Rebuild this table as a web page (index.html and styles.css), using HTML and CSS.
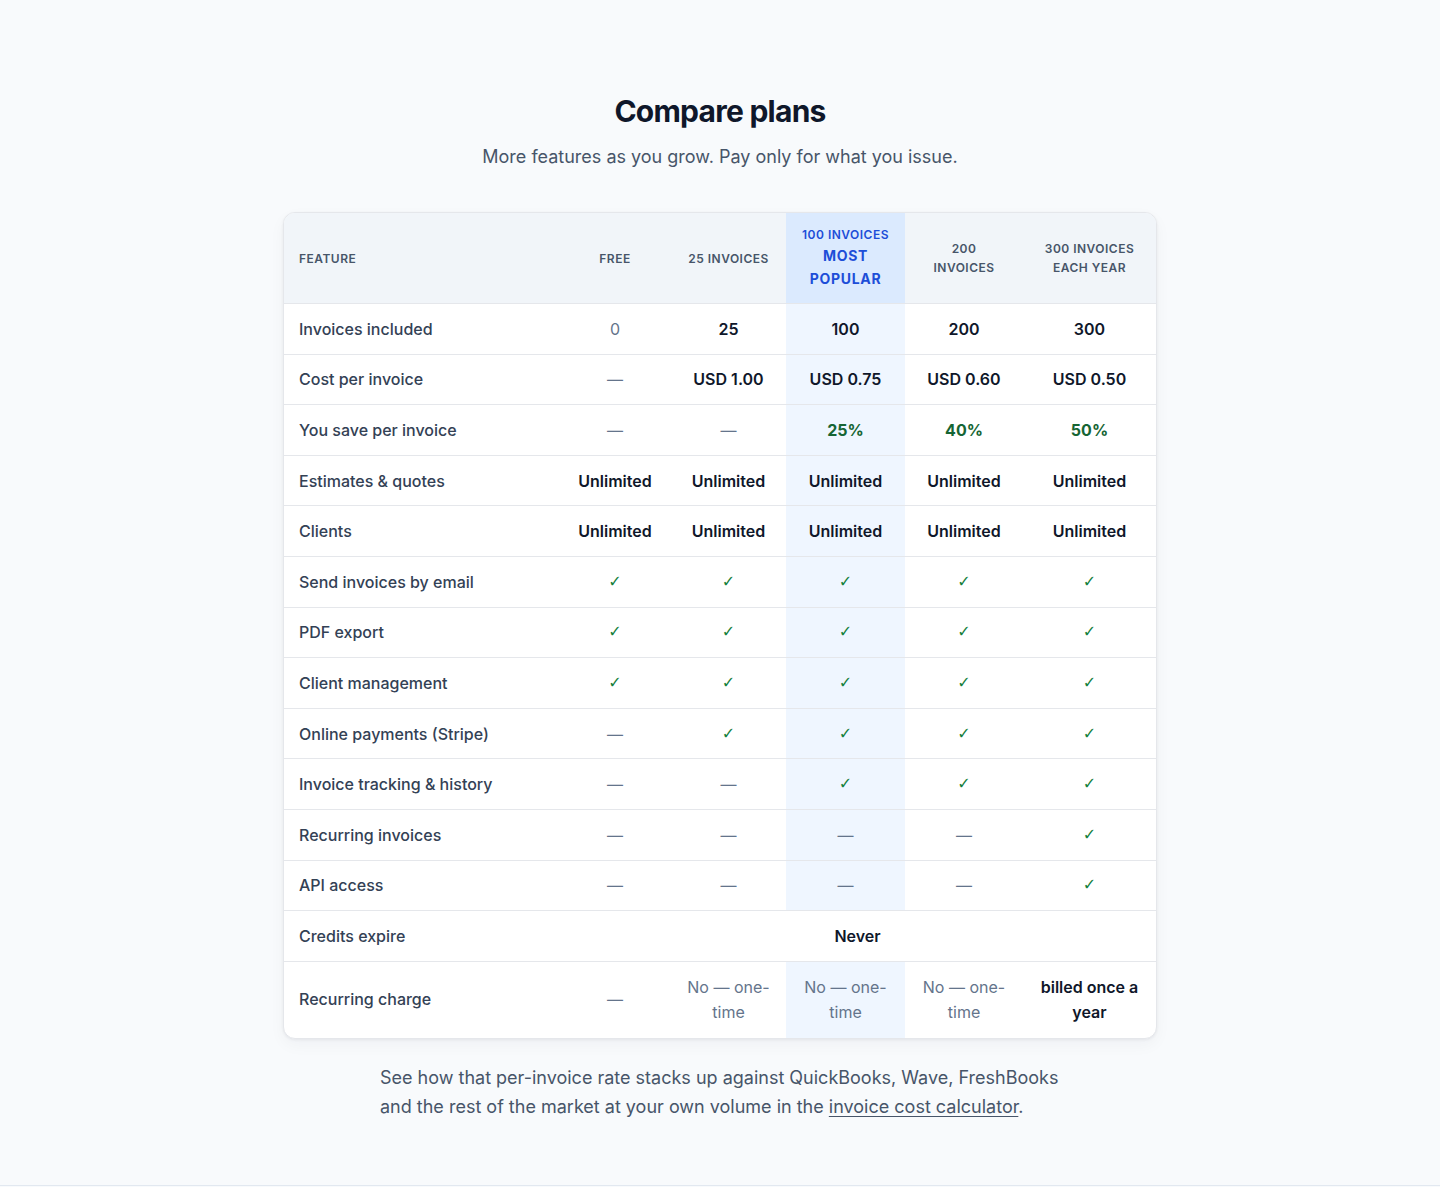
FILE: index.html
```html
<!DOCTYPE html>
<html lang="en">
<head>
<meta charset="utf-8">
<title>Compare plans</title>
<link rel="stylesheet" href="styles.css">
</head>
<body>
<section class="compare">
  <h1 class="title">Compare plans</h1>
  <p class="subtitle">More features as you grow. Pay only for what you issue.</p>
  <div class="card">
    <table class="plans">
      <colgroup>
        <col class="c-feature"><col class="c-free"><col class="c-25"><col class="c-100"><col class="c-200"><col class="c-300">
      </colgroup>
      <thead>
        <tr>
          <th class="feat">Feature</th>
          <th>Free</th>
          <th>25 invoices</th>
          <th class="pop"><span class="pop-name">100 invoices</span><span class="pop-tag">Most popular</span></th>
          <th>200 invoices</th>
          <th>300 invoices each year</th>
        </tr>
      </thead>
      <tbody>
        <tr><td class="feat">Invoices included</td><td class="muted">0</td><td class="strong">25</td><td class="pop strong">100</td><td class="strong">200</td><td class="strong">300</td></tr>
        <tr><td class="feat">Cost per invoice</td><td class="dash">—</td><td class="strong">USD 1.00</td><td class="pop strong">USD 0.75</td><td class="strong">USD 0.60</td><td class="strong">USD 0.50</td></tr>
        <tr><td class="feat">You save per invoice</td><td class="dash">—</td><td class="dash">—</td><td class="pop save">25%</td><td class="save">40%</td><td class="save">50%</td></tr>
        <tr><td class="feat">Estimates &amp; quotes</td><td class="strong">Unlimited</td><td class="strong">Unlimited</td><td class="pop strong">Unlimited</td><td class="strong">Unlimited</td><td class="strong">Unlimited</td></tr>
        <tr><td class="feat">Clients</td><td class="strong">Unlimited</td><td class="strong">Unlimited</td><td class="pop strong">Unlimited</td><td class="strong">Unlimited</td><td class="strong">Unlimited</td></tr>
        <tr><td class="feat">Send invoices by email</td><td class="check">✓</td><td class="check">✓</td><td class="pop check">✓</td><td class="check">✓</td><td class="check">✓</td></tr>
        <tr><td class="feat">PDF export</td><td class="check">✓</td><td class="check">✓</td><td class="pop check">✓</td><td class="check">✓</td><td class="check">✓</td></tr>
        <tr><td class="feat">Client management</td><td class="check">✓</td><td class="check">✓</td><td class="pop check">✓</td><td class="check">✓</td><td class="check">✓</td></tr>
        <tr><td class="feat">Online payments (Stripe)</td><td class="dash">—</td><td class="check">✓</td><td class="pop check">✓</td><td class="check">✓</td><td class="check">✓</td></tr>
        <tr><td class="feat">Invoice tracking &amp; history</td><td class="dash">—</td><td class="dash">—</td><td class="pop check">✓</td><td class="check">✓</td><td class="check">✓</td></tr>
        <tr><td class="feat">Recurring invoices</td><td class="dash">—</td><td class="dash">—</td><td class="pop dash">—</td><td class="dash">—</td><td class="check">✓</td></tr>
        <tr><td class="feat">API access</td><td class="dash">—</td><td class="dash">—</td><td class="pop dash">—</td><td class="dash">—</td><td class="check">✓</td></tr>
        <tr><td class="feat">Credits expire</td><td class="strong" colspan="5">Never</td></tr>
        <tr class="last"><td class="feat">Recurring charge</td><td class="dash">—</td><td class="muted">No — one-time</td><td class="pop muted">No — one-time</td><td class="muted">No — one-time</td><td class="strong">billed once a year</td></tr>
      </tbody>
    </table>
  </div>
  <p class="note">See how that per-invoice rate stacks up against QuickBooks, Wave, FreshBooks and the rest of the market at your own volume in the <a href="#">invoice cost calculator</a>.</p>
</section>
</body>
</html>
```

FILE: styles.css
```css
* { box-sizing: border-box; }
html, body { margin: 0; padding: 0; }
body {
  background: #f8fafc;
  font-family: Inter, "Noto Sans", sans-serif;
  color: #0f172a;
}
.compare {
  padding: 93px 0 64px;
  border-bottom: 1px solid #e2e8f0;
  display: flex;
  flex-direction: column;
  align-items: center;
}
.title {
  margin: 0;
  font-size: 30px;
  line-height: 36px;
  font-weight: 700;
  letter-spacing: -0.025em;
  color: #0f172a;
}
.subtitle {
  margin: 14px 0 0;
  font-size: 18px;
  line-height: 28px;
  color: #475569;
}
.card {
  margin-top: 41px;
  width: 874px;
  background: #fff;
  border: 1px solid #e5e7eb;
  border-radius: 12px;
  overflow: hidden;
  box-shadow: 0 1px 3px rgba(15, 23, 42, 0.06), 0 6px 16px rgba(15, 23, 42, 0.04);
}
.plans {
  width: 100%;
  border-collapse: separate;
  border-spacing: 0;
  table-layout: fixed;
}
.c-feature { width: 275px; }
.c-free { width: 112px; }
.c-25 { width: 115px; }
.c-100 { width: 119px; }
.c-200 { width: 118px; }
.c-300 { width: 133px; }
.plans th {
  background: #f1f5f9;
  padding: 13px 16px;
  font-size: 12px;
  line-height: 19px;
  font-weight: 600;
  letter-spacing: 0.04em;
  text-transform: uppercase;
  color: #475569;
  text-align: center;
  border-bottom: 1px solid #e5e7eb;
  height: 91px;
}
.plans th.feat { text-align: left; padding-left: 15px; }
.plans th.pop { background: #dbeafe; color: #1d4ed8; }
.pop-name { display: block; white-space: nowrap; font-size: 12px; line-height: 18px; }
.pop-tag { display: block; font-size: 14px; line-height: 23px; font-weight: 700; letter-spacing: 0.05em; }
.plans td {
  padding: 12.8px 16px;
  font-size: 16px;
  line-height: 24px;
  text-align: center;
  border-bottom: 1px solid #e5e7eb;
  height: 50.6px;
}
.plans tr.last td { border-bottom: 0; padding-top: 12px; padding-bottom: 12px; line-height: 25px; height: 76px; }
.plans td.feat { text-align: left; color: #334155; font-weight: 500; padding-left: 15px; }
.plans td.pop { background: #eff6ff; }
.strong { font-weight: 600; color: #0f172a; }
.muted { color: #64748b; }
.dash { color: #64748b; }
.check { color: #15803d; font-size: 14px; font-family: "DejaVu Sans", sans-serif; }
.save { color: #166534; font-weight: 700; }
.note {
  margin: 24px 0 0;
  width: 680px;
  text-align: left;
  font-size: 18px;
  line-height: 29px;
  color: #475569;
}
.note a { color: #475569; text-decoration: underline; text-underline-offset: 3px; }
```
